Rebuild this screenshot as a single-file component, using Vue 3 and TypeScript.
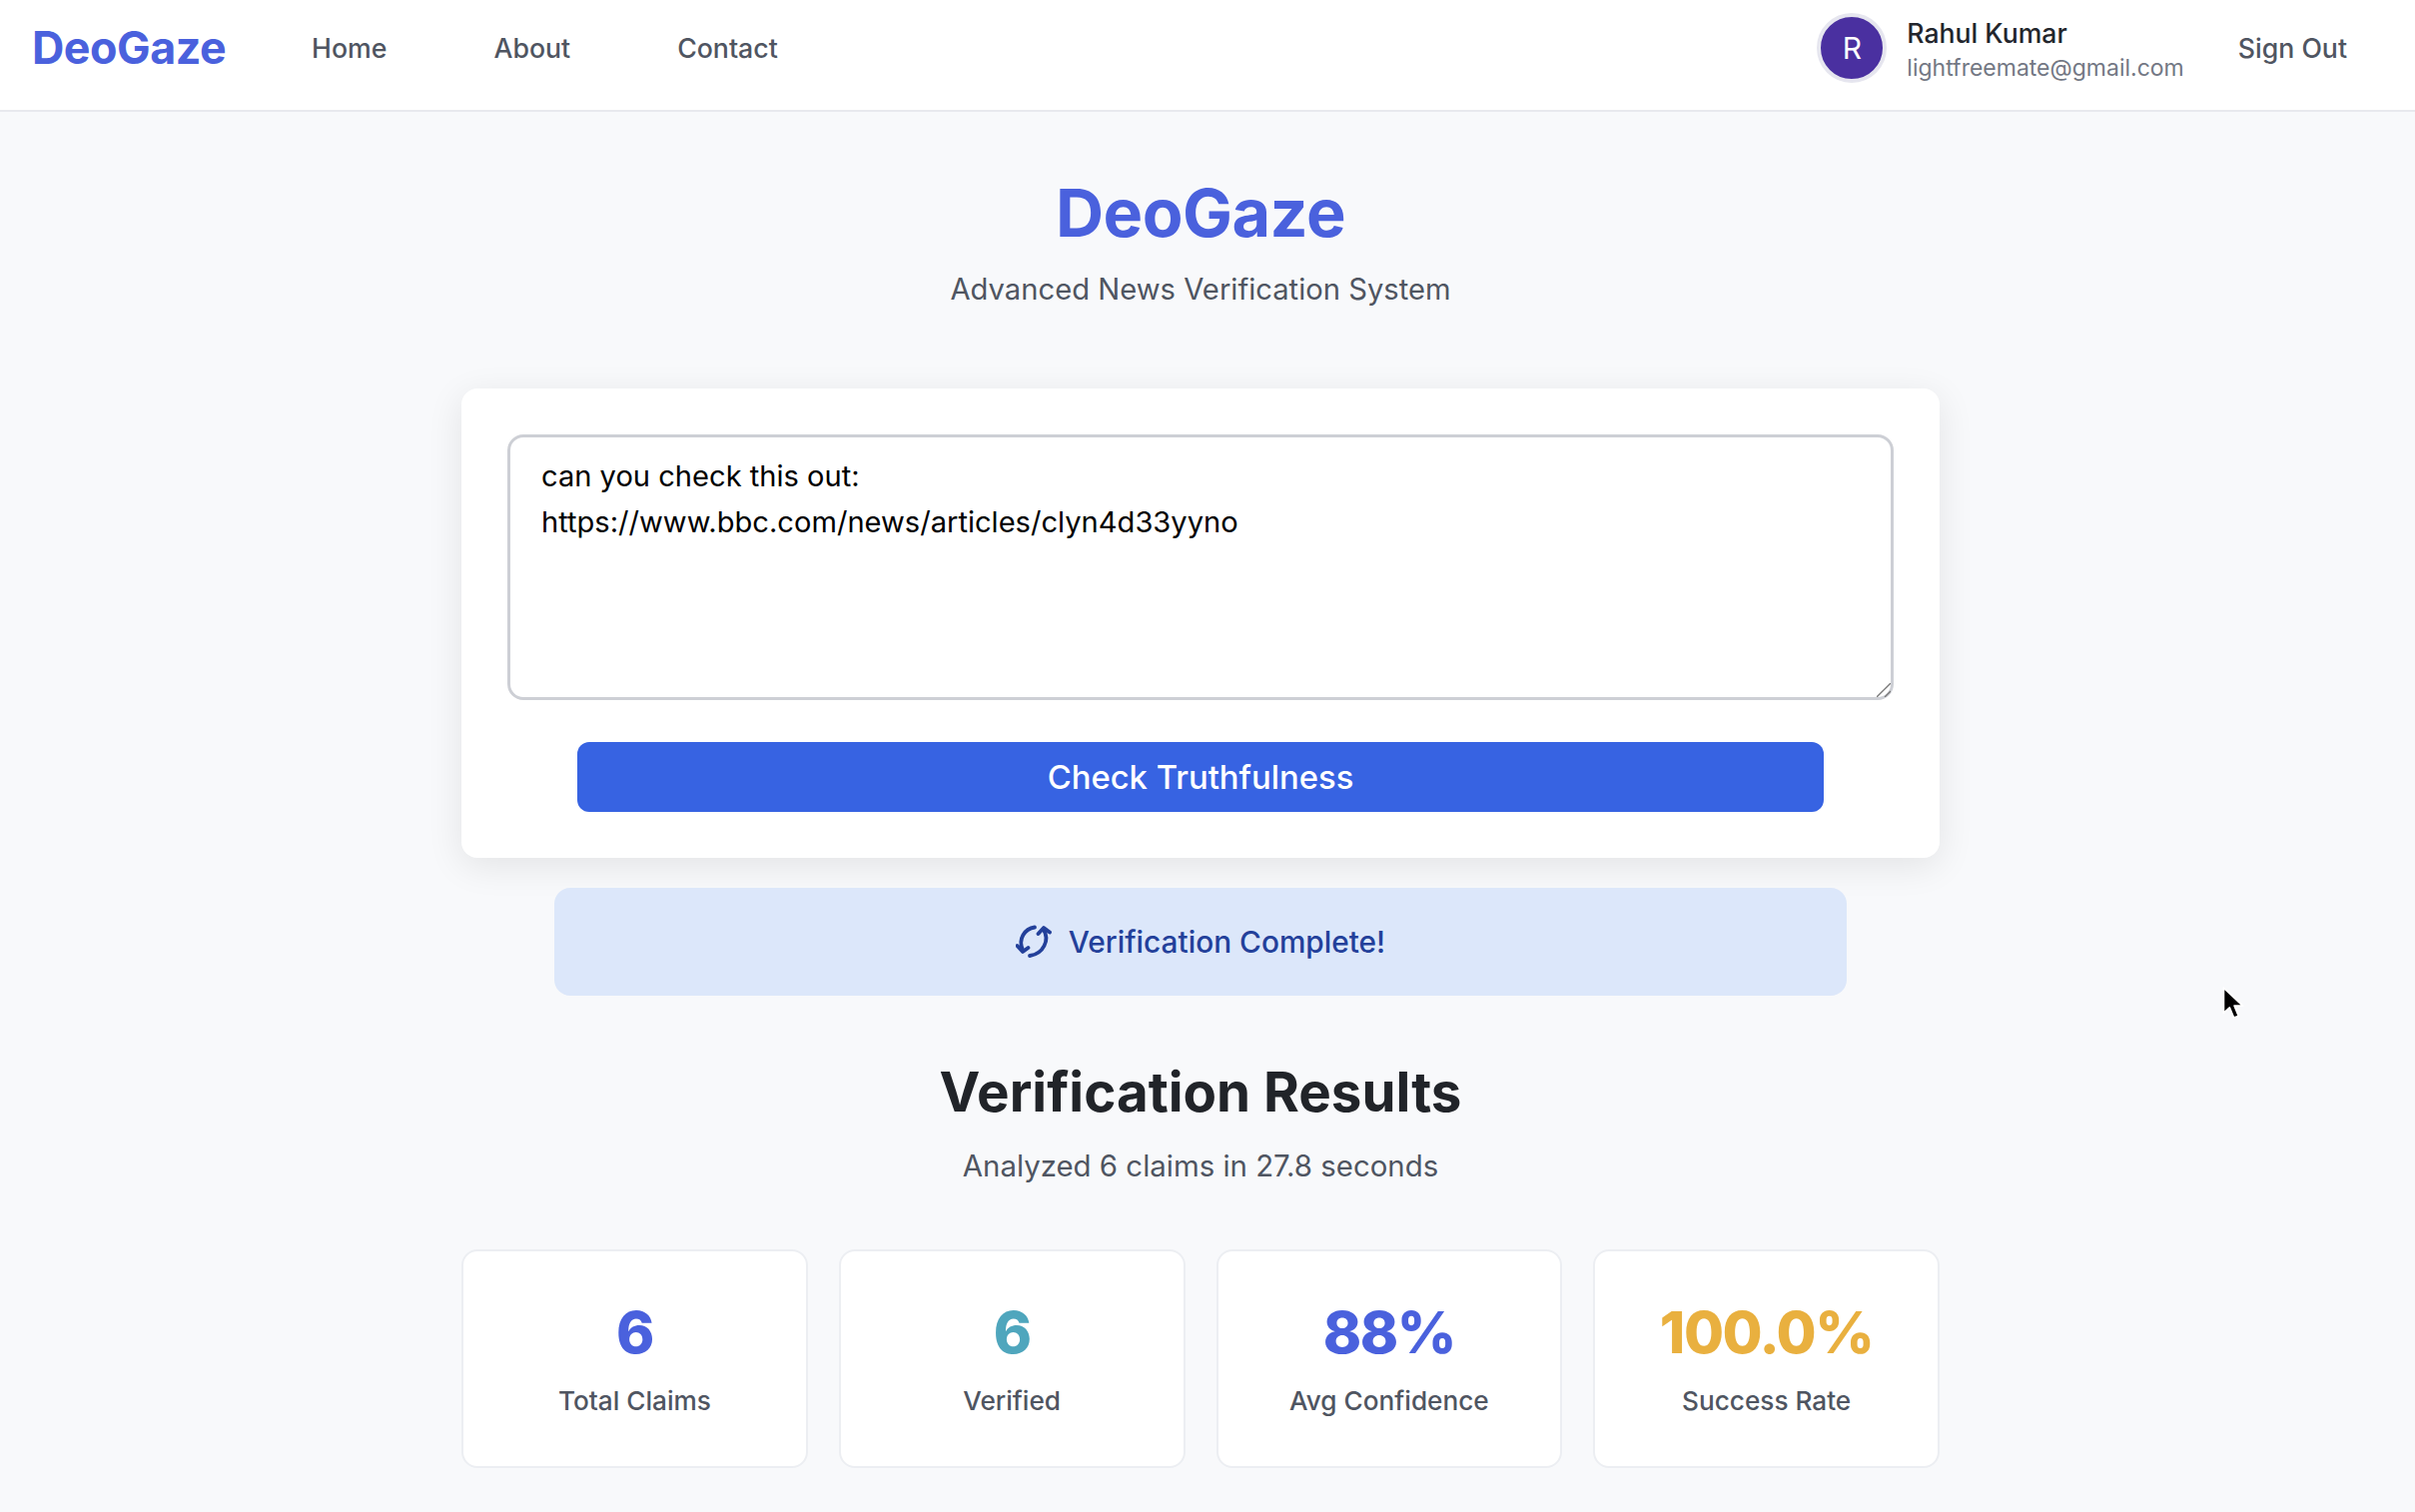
<script setup lang="ts">
import { ref } from "vue";

const claimText = ref("can you check this out:\nhttps://www.bbc.com/news/articles/clyn4d33yyno");

const navLinks = ["Home", "About", "Contact"];

const stats = [
  { value: "6", label: "Total Claims", color: "#4a61dd" },
  { value: "6", label: "Verified", color: "#4fa6bd" },
  { value: "88%", label: "Avg Confidence", color: "#4a61dd" },
  { value: "100.0%", label: "Success Rate", color: "#e9b03f" },
];
</script>

<template>
  <div class="page">
    <header class="navbar">
      <div class="nav-left">
        <span class="logo">DeoGaze</span>
        <nav class="nav-links">
          <a v-for="link in navLinks" :key="link" class="nav-link">{{ link }}</a>
        </nav>
      </div>
      <div class="nav-right">
        <div class="avatar">R</div>
        <div class="user-info">
          <span class="user-name">Rahul Kumar</span>
          <span class="user-email">lightfreemate@gmail.com</span>
        </div>
        <a class="sign-out">Sign Out</a>
      </div>
    </header>

    <!-- the original has a hidden scrollbar gutter, so the column sits a little left of centre -->
    <div class="main-wrap">
      <main class="content">
        <h1 class="title">DeoGaze</h1>
        <p class="subtitle">Advanced News Verification System</p>

        <section class="input-card">
          <div class="input-wrap">
            <textarea v-model="claimText" class="claim-input" spellcheck="false"></textarea>
            <svg class="resize-grip" viewBox="0 0 14 14" fill="none" stroke="#777" stroke-width="1.300">
              <path d="M0 14 L14 0" />
              <path d="M8 14 L14 8" />
            </svg>
          </div>
          <button class="check-button">Check Truthfulness</button>
        </section>

        <div class="status">
          <svg class="status-icon" viewBox="0 0 36 36" fill="none" stroke="currentColor" stroke-width="3.800" stroke-linecap="round" stroke-linejoin="round">
            <path d="M7 26 C2 15 9 5 19 3.500" />
            <path d="M1.500 22 L7 28 L12.500 24" />
            <path d="M28 6 C34 16 28 30 14 32" />
            <path d="M22.500 10 L28 4 L34 8.500" />
          </svg>
          <span>Verification Complete!</span>
        </div>

        <h2 class="results-title">Verification Results</h2>
        <p class="results-subtitle">Analyzed 6 claims in 27.8 seconds</p>

        <section class="stats-grid">
          <div v-for="stat in stats" :key="stat.label" class="stat-card">
            <div class="stat-value" :style="{ color: stat.color }">{{ stat.value }}</div>
            <div class="stat-label">{{ stat.label }}</div>
          </div>
        </section>
      </main>
    </div>

    <!-- mouse pointer caught in the screenshot -->
    <svg class="cursor" viewBox="0 0 20 30">
      <path d="M2 1 L2 22 L7 17.500 L10.500 26 L14.500 24.500 L11 16 L18 16 Z" fill="#000" stroke="#fff" stroke-width="1.500" stroke-linejoin="round" />
    </svg>
  </div>
</template>

<style>
html,
body {
  margin: 0;
  background: #f8f9fb;
}
</style>

<style scoped>
.page {
  position: relative;
  height: 1514px;
  overflow: hidden;
  background: #f8f9fb;
  font-family: Inter, "Liberation Sans", sans-serif;
}

.navbar {
  display: flex;
  align-items: center;
  justify-content: space-between;
  box-sizing: border-box;
  height: 112px;
  padding: 0 68px 15px 32px;
  background: #fff;
  border-bottom: 2px solid #e8e9ee;
}

.nav-left,
.nav-right {
  display: flex;
  align-items: center;
}

.logo {
  font-size: 44.800px;
  font-weight: 700;
  color: #4a61dd;
  letter-spacing: -0.5px;
}

.nav-links {
  display: flex;
  gap: 107px;
  margin-left: 86px;
}

.nav-link {
  font-size: 26.700px;
  font-weight: 500;
  color: #4f5561;
}

.avatar {
  display: flex;
  align-items: center;
  justify-content: center;
  width: 62px;
  height: 62px;
  border: 4px solid #e6e6ef;
  border-radius: 50%;
  background: #4a30a0;
  color: #fff;
  font-size: 30px;
}

.user-info {
  display: flex;
  flex-direction: column;
  gap: 5px;
  margin-left: 20px;
  padding-top: 4px;
}

.user-name {
  font-size: 26.600px;
  font-weight: 500;
  color: #23262d;
}

.user-email {
  font-size: 23px;
  color: #737884;
}

.sign-out {
  margin-left: 54px;
  font-size: 26.700px;
  font-weight: 500;
  color: #4f5561;
}

.main-wrap {
  padding-right: 14px;
}

.content {
  display: flex;
  flex-direction: column;
  align-items: center;
  width: 1480px;
  margin: 0 auto;
}

.title {
  margin: 60px 0 0;
  font-size: 66.600px;
  font-weight: 700;
  line-height: 82px;
  color: #4a61dd;
  letter-spacing: -0.5px;
}

.subtitle {
  margin: 16px 0 0;
  font-size: 29.200px;
  line-height: 40px;
  color: #4f5561;
}

.input-card {
  display: flex;
  flex-direction: column;
  align-items: center;
  box-sizing: border-box;
  width: 100%;
  margin-top: 79px;
  padding: 46px;
  background: #fff;
  border-radius: 16px;
  box-shadow: 0 8px 36px rgba(0, 0, 0, 0.09);
}

.input-wrap {
  position: relative;
  display: flex;
  width: 100%;
}

.claim-input {
  box-sizing: border-box;
  width: 100%;
  height: 266px;
  padding: 16px 31px;
  border: 3px solid #cdcfd5;
  border-radius: 16px;
  outline: none;
  font-family: inherit;
  font-size: 29.100px;
  line-height: 46px;
  color: #000;
  resize: none;
}

.resize-grip {
  position: absolute;
  right: 3px;
  bottom: 3px;
  width: 14px;
  height: 14px;
}

.check-button {
  width: 1248px;
  height: 70px;
  margin-top: 42px;
  border: none;
  border-radius: 12px;
  background: #3763e2;
  color: #fff;
  font-family: inherit;
  font-size: 32.800px;
  font-weight: 500;
}

.status {
  display: flex;
  align-items: center;
  justify-content: center;
  gap: 17px;
  box-sizing: border-box;
  width: 1294px;
  height: 108px;
  margin-top: 30px;
  border-radius: 16px;
  background: #dce7fa;
  color: #23409a;
  font-size: 29.800px;
  font-weight: 500;
}

.status-icon {
  width: 36px;
  height: 36px;
}

.results-title {
  margin: 60px 0 0;
  font-size: 54.700px;
  font-weight: 700;
  line-height: 72px;
  color: #212429;
}

.results-subtitle {
  margin: 19px 0 0;
  font-size: 29.400px;
  line-height: 40px;
  color: #4f5561;
}

.stats-grid {
  display: grid;
  grid-template-columns: repeat(4, 1fr);
  gap: 31px;
  width: 100%;
  margin-top: 63px;
}

.stat-card {
  box-sizing: border-box;
  height: 219px;
  padding-top: 46px;
  background: #fff;
  border: 2px solid #eceef2;
  border-radius: 16px;
  text-align: center;
}

.stat-value {
  font-size: 58px;
  font-weight: 800;
  line-height: 70px;
  letter-spacing: -1.500px;
}

.stat-label {
  margin-top: 16px;
  font-size: 26.200px;
  font-weight: 500;
  line-height: 36px;
  color: #4f5561;
}

.cursor {
  position: absolute;
  left: 2224px;
  top: 988px;
  width: 24px;
  height: 36px;
}
</style>
